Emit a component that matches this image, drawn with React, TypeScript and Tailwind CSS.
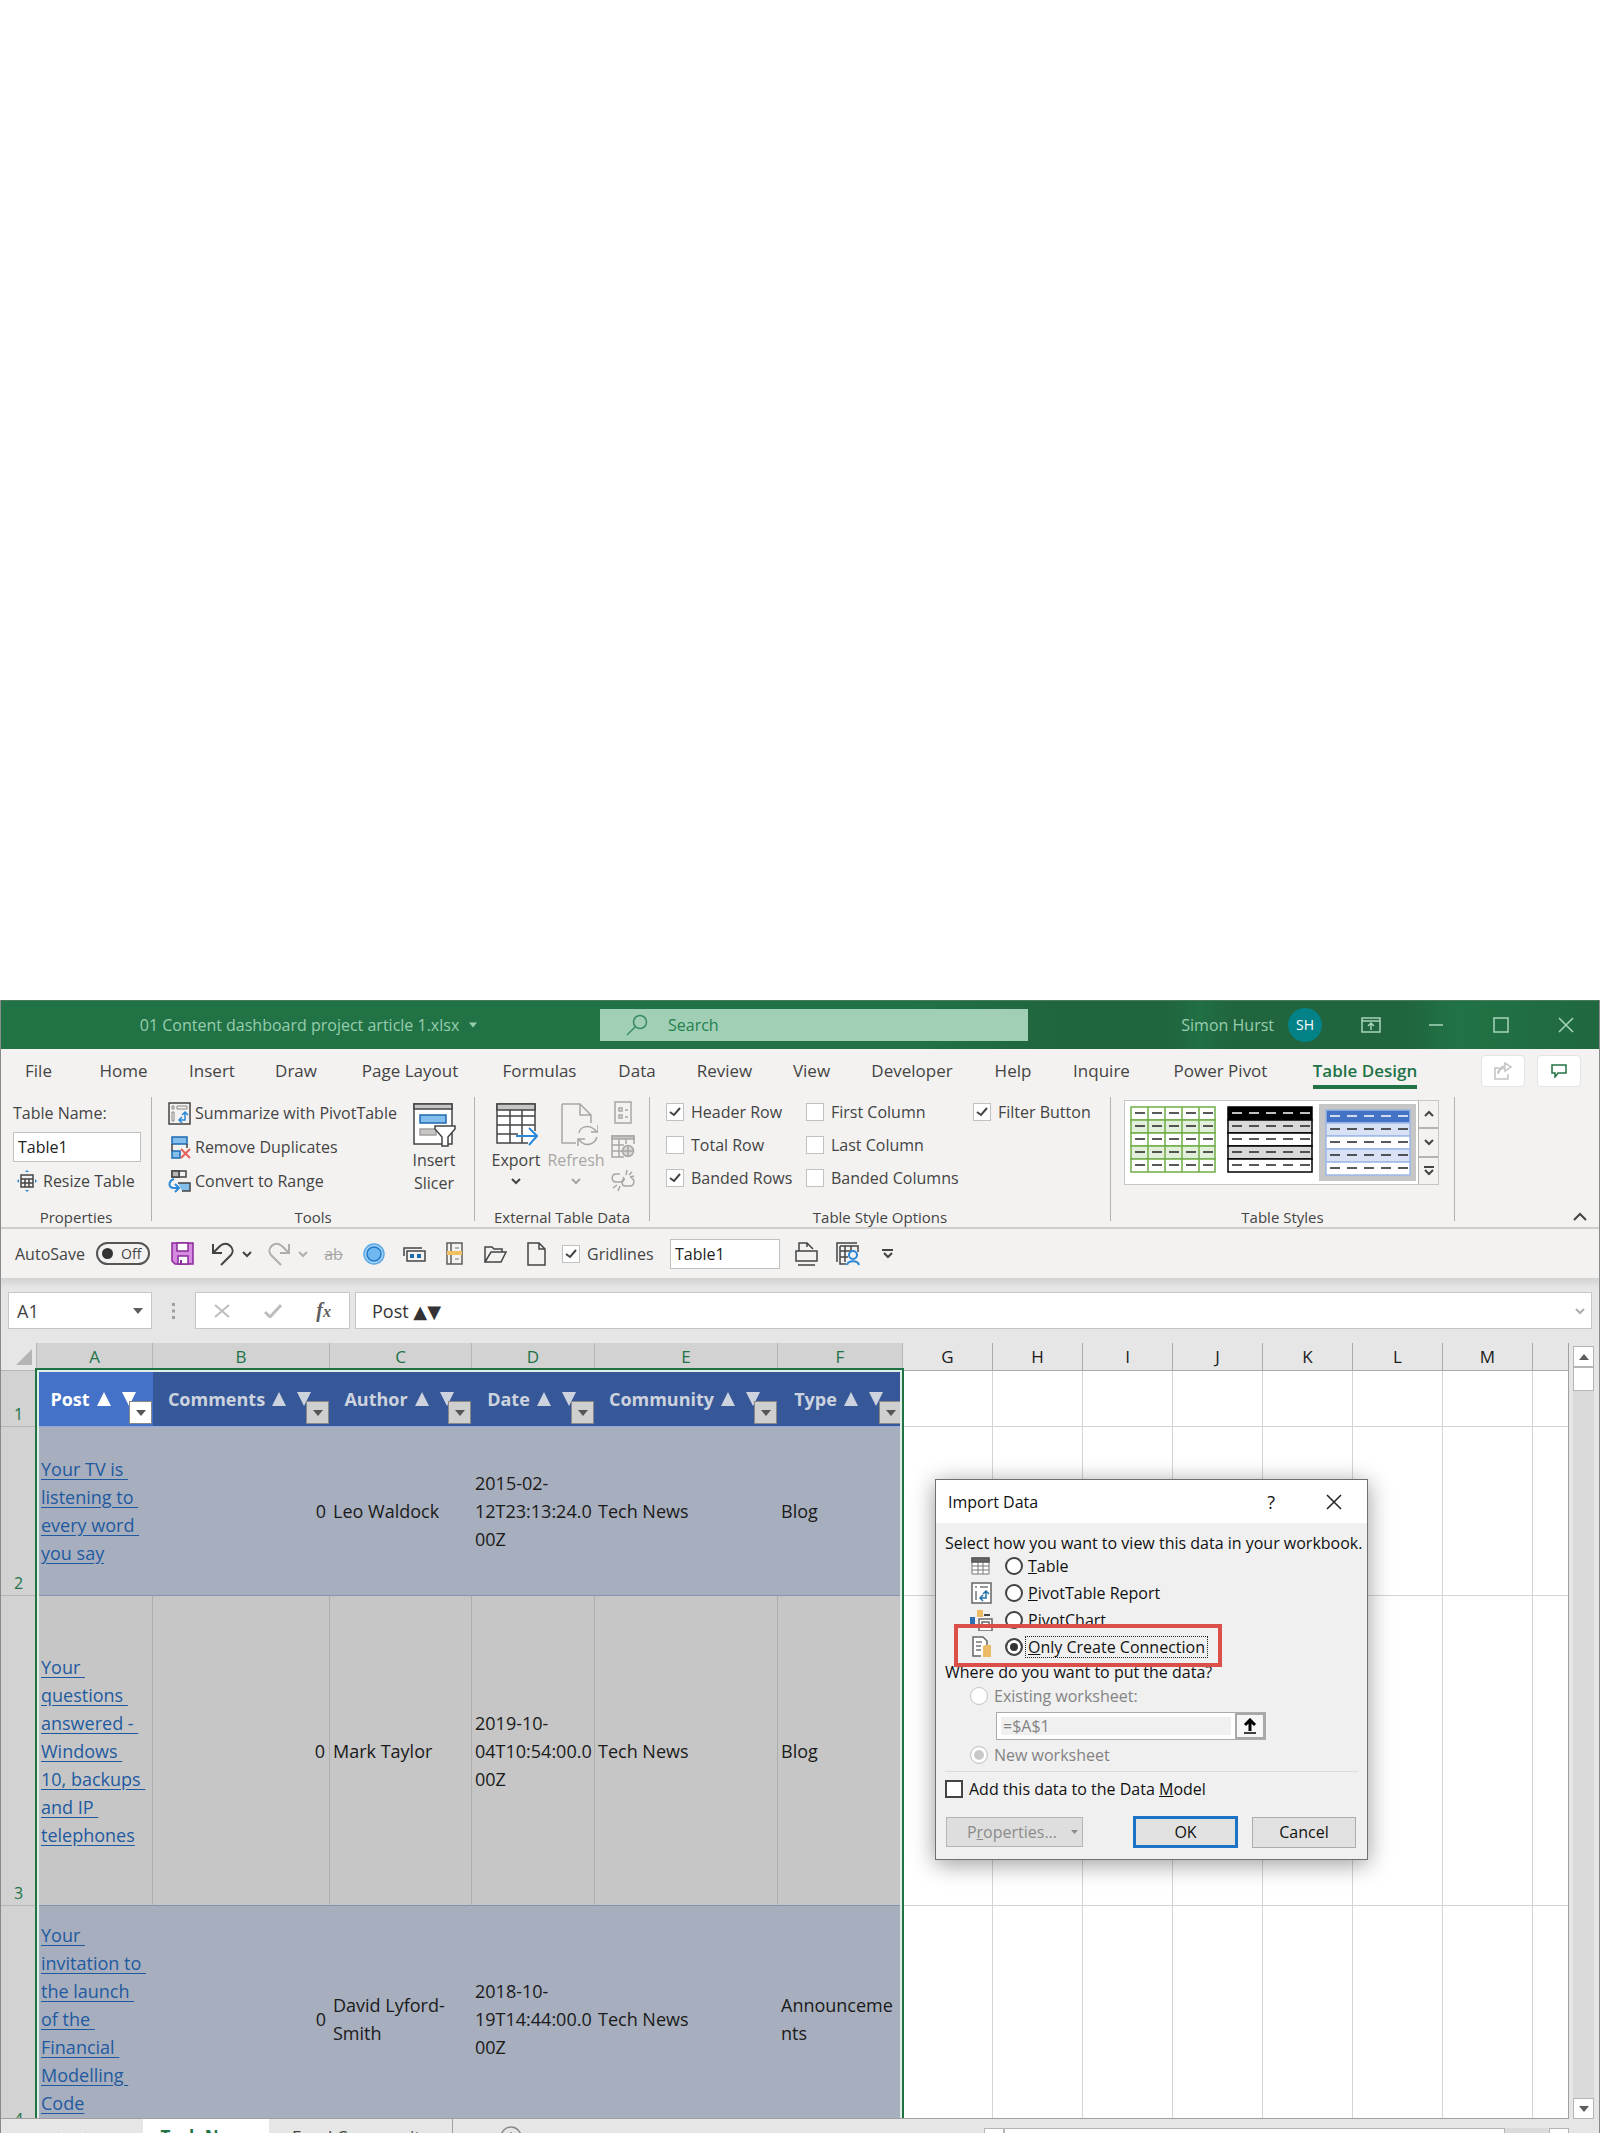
import type { ReactNode } from 'react';
import { clsx } from 'clsx';

const tabs = [
  { label: 'File', width: 'w-[75px]' },
  { label: 'Home', width: 'w-[95px]' },
  { label: 'Insert', width: 'w-[82px]' },
  { label: 'Draw', width: 'w-[86px]' },
  { label: 'Page Layout', width: 'w-[142px]' },
  { label: 'Formulas', width: 'w-[117px]' },
  { label: 'Data', width: 'w-[78px]' },
  { label: 'Review', width: 'w-[97px]' },
  { label: 'View', width: 'w-[77px]' },
  { label: 'Developer', width: 'w-[124px]' },
  { label: 'Help', width: 'w-[78px]' },
  { label: 'Inquire', width: 'w-[99px]' },
  { label: 'Power Pivot', width: 'w-[139px]' },
  { label: 'Table Design', width: 'w-[150px]', active: true },
];

const columns = [
  { letter: 'A', width: 'w-[116px]', title: 'Post' },
  { letter: 'B', width: 'w-[177px]', title: 'Comments' },
  { letter: 'C', width: 'w-[142px]', title: 'Author' },
  { letter: 'D', width: 'w-[123px]', title: 'Date' },
  { letter: 'E', width: 'w-[183px]', title: 'Community' },
  { letter: 'F', width: 'w-[125px]', title: 'Type' },
];

const emptyColumns = ['G', 'H', 'I', 'J', 'K', 'L', 'M'];

const rows = [
  {
    height: 'h-[169px]',
    post: 'Your TV is \nlistening to \nevery word \nyou say',
    comments: 0,
    author: 'Leo Waldock',
    date: '2015-02-\n12T23:13:24.0\n00Z',
    community: 'Tech News',
    type: 'Blog',
  },
  {
    height: 'h-[310px]',
    post: 'Your \nquestions \nanswered - \nWindows \n10, backups \nand IP \ntelephones',
    comments: 0,
    author: 'Mark Taylor',
    date: '2019-10-\n04T10:54:00.0\n00Z',
    community: 'Tech News',
    type: 'Blog',
  },
  {
    height: 'h-[226px]',
    post: 'Your \ninvitation to \nthe launch \nof the \nFinancial \nModelling \nCode',
    comments: 0,
    author: 'David Lyford-\nSmith',
    date: '2018-10-\n19T14:44:00.0\n00Z',
    community: 'Tech News',
    type: 'Announceme\nnts',
  },
];

/* ---------- small shared pieces ---------- */

interface IconProps {
  w: number;
  h: number;
  children: ReactNode;
  className?: string;
}

function Icon({ w, h, children, className }: IconProps) {
  return (
    <svg
      width={w}
      height={h}
      viewBox={`0 0 ${w} ${h}`}
      fill="none"
      stroke="#444"
      strokeWidth="1.5"
      className={clsx('shrink-0', className)}
      aria-hidden="true"
    >
      {children}
    </svg>
  );
}

function Chevron({ className, up = false }: { className?: string; up?: boolean }) {
  return (
    <Icon w={10} h={8} className={className}>
      <path d={up ? 'M1 6L5 2L9 6' : 'M1 2L5 6L9 2'} stroke="currentColor" strokeWidth="2" />
    </Icon>
  );
}

function Triangle({ className, up = false }: { className?: string; up?: boolean }) {
  return (
    <Icon w={10} h={6} className={className}>
      <path d={up ? 'M0 6H10L5 0Z' : 'M0 0H10L5 6Z'} fill="currentColor" stroke="none" />
    </Icon>
  );
}

function CheckOption({ label, checked = false }: { label: string; checked?: boolean }) {
  return (
    <label className="flex items-center gap-[7px]">
      <span className="relative flex">
        <input
          type="checkbox"
          defaultChecked={checked}
          className="peer h-[18px] w-[18px] appearance-none border border-[#c3c1bf] bg-white"
        />
        <Icon w={18} h={18} className="pointer-events-none absolute inset-0 hidden peer-checked:block">
          <path d="M4 9L8 12L14 5" strokeWidth="2" />
        </Icon>
      </span>
      {label}
    </label>
  );
}

function RibbonGroup({ label, className, children }: { label: string; className: string; children: ReactNode }) {
  return (
    <section className={clsx('flex shrink-0 flex-col border-r border-[#b5b3b1]', className)}>
      <div className="flex h-28 shrink-0 items-start">{children}</div>
      <h2 className="h-3 text-center text-[15px] leading-4 whitespace-nowrap">{label}</h2>
    </section>
  );
}

/* ---------- title bar ---------- */

function TitleBar() {
  return (
    <header className="flex h-[49px] shrink-0 items-center border-t border-[#4a7a5e] bg-[linear-gradient(90deg,#217346_57%,#20653e_66%,#20653e_73%,#216f44_75%,#20653e_77%,#20653e_88%,#217346_91%,#20683f_100%)] text-[#97cdae]">
      <div className="flex w-[599px] items-center justify-center gap-[10px] pl-4">
        <span>01 Content dashboard project article 1.xlsx</span>
        <Triangle className="w-2" />
      </div>
      <label className="flex h-8 w-[428px] items-center gap-5 bg-[#a0cfb5] pl-[26px] text-[#25804d]">
        <Icon w={22} h={22}>
          <circle cx="14" cy="8" r="6.5" stroke="#378c5d" />
          <path d="M9 13L1 21" stroke="#378c5d" />
        </Icon>
        <input
          type="text"
          aria-label="Search"
          placeholder="Search"
          className="w-full bg-transparent outline-none placeholder:text-[#25804d]"
        />
      </label>
      <div className="flex flex-1 items-center justify-end">
        <span>Simon Hurst</span>
        <span className="ml-[14px] flex h-[34px] w-[34px] items-center justify-center rounded-full bg-[#038387] text-sm text-white">
          SH
        </span>
        <button type="button" aria-label="Ribbon display options" className="ml-[39px]">
          <Icon w={20} h={16}>
            <path d="M1 1H19V15H1ZM1 4H19M10 13V6M7 9L10 6L13 9" stroke="#a8d5bb" />
          </Icon>
        </button>
        <button type="button" aria-label="Minimize" className="ml-[47px]">
          <Icon w={16} h={16}>
            <path d="M1 8H15" stroke="#a8d5bb" />
          </Icon>
        </button>
        <button type="button" aria-label="Maximize" className="ml-[49px]">
          <Icon w={16} h={16}>
            <path d="M1 1H15V15H1Z" stroke="#a8d5bb" />
          </Icon>
        </button>
        <button type="button" aria-label="Close" className="mr-[25px] ml-[49px]">
          <Icon w={16} h={16}>
            <path d="M1 1L15 15M15 1L1 15" stroke="#a8d5bb" />
          </Icon>
        </button>
      </div>
    </header>
  );
}

/* ---------- ribbon ---------- */

function RibbonTabs() {
  return (
    <nav className="flex h-12 shrink-0 items-start text-[17px]">
      {tabs.map((tab) => (
        <button key={tab.label} type="button" className={clsx('flex shrink-0 justify-center pt-2', tab.width)}>
          <span
            className={clsx(
              'h-8 border-b-4 leading-7 whitespace-nowrap',
              tab.active ? 'border-[#217346] font-semibold text-[#217346]' : 'border-transparent',
            )}
          >
            {tab.label}
          </span>
        </button>
      ))}
      <div className="ml-auto flex gap-3 pt-[6px] pr-[18px]">
        <button type="button" aria-label="Share" className="flex h-8 w-11 items-center justify-center rounded-sm border border-[#e6e4e2] bg-white">
          <Icon w={18} h={18}>
            <path d="M5 6H1V17H14V12M4 12C5 8 8 6 11 6V9L17 5L11 1V4C7 4 4 8 4 12Z" stroke="#c4c2c0" />
          </Icon>
        </button>
        <button type="button" aria-label="Comments" className="flex h-8 w-11 items-center justify-center rounded-sm border border-[#e6e4e2] bg-white">
          <Icon w={16} h={14}>
            <path d="M1 1H15V9H7L4 13V9H1Z" stroke="#217346" />
          </Icon>
        </button>
      </div>
    </nav>
  );
}

function PropertiesGroup() {
  return (
    <RibbonGroup label="Properties" className="w-[151px]">
      <div className="flex flex-col pl-3">
        <label htmlFor="table-name" className="mt-1 leading-6">
          Table Name:
        </label>
        <input
          id="table-name"
          type="text"
          defaultValue="Table1"
          className="mt-[7px] h-[30px] w-32 border border-[#c3c1bf] bg-white px-1 text-[#222]"
        />
        <button type="button" className="mt-[7px] flex items-center gap-[6px] pl-1 leading-6 whitespace-nowrap">
          <Icon w={20} h={22}>
            <path d="M4 5H16V17H4ZM4 9H16M4 13H16M8 9V17M12 9V17" />
            <path d="M8 2L10 0L12 2ZM8 20L10 22L12 20ZM2 9L0 11L2 13ZM18 9L20 11L18 13Z" fill="#2b88d8" stroke="none" />
          </Icon>
          Resize Table
        </button>
      </div>
    </RibbonGroup>
  );
}

function ToolsGroup() {
  return (
    <RibbonGroup label="Tools" className="w-[323px]">
      <div className="flex w-[242px] flex-col gap-[10px] pt-1 pl-4 leading-6">
        <button type="button" className="flex items-center gap-1 whitespace-nowrap">
          <Icon w={23} h={23}>
            <path d="M1 1H22V22H1Z" />
            <path d="M4 4H6V7H4ZM9 4H19V7H9ZM4 10H6V19H4Z" stroke="#8a8886" strokeWidth="1" />
            <path d="M11 18H17V10M14 13L17 10L20 13M14 15L11 18L14 21" stroke="#2b88d8" />
          </Icon>
          Summarize with PivotTable
        </button>
        <button type="button" className="flex items-center gap-1 whitespace-nowrap">
          <Icon w={23} h={23}>
            <path d="M4 1H19V8H4ZM4 15H12V22H4Z" fill="#83beec" stroke="#1e6ab0" />
            <path d="M4 8V15M19 8V12" />
            <path d="M13 13L22 22M22 13L13 22" stroke="#e8605c" strokeWidth="2" />
          </Icon>
          Remove Duplicates
        </button>
        <button type="button" className="flex items-center gap-1 whitespace-nowrap">
          <Icon w={23} h={23}>
            <path d="M4 1H18V7H4ZM11 1V7" />
            <path d="M11 1H4V7H11Z" fill="#b8b6b4" />
            <path d="M10 13H22V21H14" fill="#83beec" />
            <path d="M6 9C0 11 0 18 6 18H11M7 14L11 18L7 22" stroke="#2b88d8" strokeWidth="2" />
          </Icon>
          Convert to Range
        </button>
      </div>
      <button type="button" className="flex w-[80px] flex-col items-center pt-[6px]">
        <Icon w={44} h={44}>
          <path d="M2 1H40V41H2Z" fill="#fff" />
          <path d="M2 1H40V6H2Z" fill="#c8c6c4" />
          <path d="M8 12H34V20H8Z" fill="#83beec" stroke="#1e6ab0" />
          <path d="M8 26H24V32H8Z" fill="#c8c6c4" stroke="#a19f9d" />
          <path d="M23 23H43V26L36 34V43H30V34L23 26Z" fill="#fff" />
        </Icon>
        <span className="pt-[2px] leading-[23px]">
          Insert
          <br />
          Slicer
        </span>
      </button>
    </RibbonGroup>
  );
}

function ExternalDataGroup() {
  return (
    <RibbonGroup label="External Table Data" className="w-[175px]">
      <button type="button" className="ml-3 flex w-[58px] flex-col items-center pt-[6px]">
        <Icon w={44} h={44}>
          <path d="M3 1H41V40H3Z" fill="#fff" stroke="none" />
          <path d="M41 28V1H3V40H34M3 13H41M3 22H41M3 31H24M16 7V40M28 7V40" />
          <path d="M3 1H41V7H3Z" fill="#c8c6c4" />
          <path d="M22 33H43M35 25L43 33L35 42" stroke="#2b88d8" strokeWidth="2" />
        </Icon>
        <span className="leading-[26px]">Export</span>
        <Chevron className="mt-1" />
      </button>
      <button type="button" disabled className="ml-px flex w-[60px] flex-col items-center pt-[6px] text-[#a8a6a4]">
        <Icon w={44} h={44}>
          <path d="M8 1H26L37 12V20M26 1V12H37M22 40H8V1" stroke="#a8a6a4" />
          <path d="M25 30C26 24 34 21 40 26L43 29M44 22V29H37M43 34C41 41 33 44 27 39L25 36M24 43V36H31" stroke="#a8a6a4" />
        </Icon>
        <span className="leading-[26px]">Refresh</span>
        <Chevron className="mt-1" />
      </button>
      <div className="flex flex-col gap-[11px] pt-[4px] pl-[5px]">
        <button type="button" disabled aria-label="Properties">
          <Icon w={24} h={23}>
            <path d="M4 1H20V22H4Z" stroke="#a8a6a4" />
            <path d="M8 7H11V10H8ZM14 9H17M8 14H11V17H8ZM14 16H17" stroke="#a8a6a4" />
          </Icon>
        </button>
        <button type="button" disabled aria-label="Open in browser">
          <Icon w={24} h={23}>
            <path d="M13 22H1V1H23V9M1 10H13M1 16H12M8 4V22M15 4V9" stroke="#a8a6a4" />
            <path d="M1 1H23V4H1Z" fill="#c8c6c4" stroke="#a8a6a4" />
            <circle cx="17" cy="16" r="5.5" fill="#dad8d6" stroke="#a8a6a4" />
            <path d="M12 16H22M17 11V21" stroke="#a8a6a4" />
          </Icon>
        </button>
        <button type="button" disabled aria-label="Unlink">
          <Icon w={24} h={23}>
            <path d="M9 5H5C0 5 0 13 5 13H10C13 13 14 10 12 8M14 10C10 10 10 17 14 17H19C24 17 24 9 20 9M16 1L15 6M21 3L18 6M23 7L19 8M6 16L2 19M9 17L7 22" stroke="#a8a6a4" />
          </Icon>
        </button>
      </div>
    </RibbonGroup>
  );
}

function StyleOptionsGroup() {
  return (
    <RibbonGroup label="Table Style Options" className="w-[461px]">
      <div className="flex w-[140px] flex-col gap-[9px] pt-[3px] pl-4 leading-6 whitespace-nowrap">
        <CheckOption label="Header Row" checked />
        <CheckOption label="Total Row" />
        <CheckOption label="Banded Rows" checked />
      </div>
      <div className="flex w-[167px] flex-col gap-[9px] pt-[3px] pl-4 leading-6 whitespace-nowrap">
        <CheckOption label="First Column" />
        <CheckOption label="Last Column" />
        <CheckOption label="Banded Columns" />
      </div>
      <div className="pt-[3px] pl-4 leading-6 whitespace-nowrap">
        <CheckOption label="Filter Button" checked />
      </div>
    </RibbonGroup>
  );
}

interface SwatchProps {
  label: string;
  line: string;
  head: string;
  band: string;
  headDash?: string;
  grid?: boolean;
}

function StyleSwatch({ label, line, head, band, headDash = '#222', grid = false }: SwatchProps) {
  return (
    <button type="button" aria-label={label}>
      <Icon w={86} h={67}>
        {[0, 1, 2, 3, 4].map((r) => (
          <g key={r}>
            <rect x="1" y={1 + r * 13} width="84" height="13" fill={r === 0 ? head : r % 2 ? band : '#fff'} stroke={line} />
            {[0, 1, 2, 3, 4].map((c) => (
              <path key={c} d={`M${5 + c * 17} ${7 + r * 13}h10`} stroke={r === 0 ? headDash : '#222'} />
            ))}
          </g>
        ))}
        {grid && <path d="M18 1V66M35 1V66M52 1V66M69 1V66" stroke={line} />}
      </Icon>
    </button>
  );
}

function TableStylesGroup() {
  return (
    <RibbonGroup label="Table Styles" className="w-[344px]">
      <div className="mt-[3px] ml-[13px] flex h-[85px] border border-[#c8c6c4] bg-white">
        <div className="flex items-center">
          <div className="px-[5px]">
            <StyleSwatch label="Light green style" line="#70ad47" head="#fff" band="#e2efda" grid />
          </div>
          <div className="px-[6px]">
            <StyleSwatch label="Black style" line="#000" head="#000" band="#d9d9d9" headDash="#fff" />
          </div>
          <div className="flex h-[77px] w-[97px] items-center justify-center bg-[#c6c6c6]">
            <StyleSwatch label="Blue style" line="#9db8e6" head="#4472c4" band="#d9e2f5" headDash="#fff" />
          </div>
        </div>
        <div className="ml-[2px] flex w-5 flex-col divide-y-2 divide-[#b5b3b1] border-l border-[#b5b3b1] bg-[#f3f2f1]">
          <button type="button" aria-label="Previous styles" className="flex flex-1 items-center justify-center">
            <Chevron up />
          </button>
          <button type="button" aria-label="Next styles" className="flex flex-1 items-center justify-center">
            <Chevron />
          </button>
          <button type="button" aria-label="More styles" className="flex flex-1 items-center justify-center">
            <Icon w={10} h={10}>
              <path d="M0 1H10M1 4L5 8L9 4" strokeWidth="2" />
            </Icon>
          </button>
        </div>
      </div>
    </RibbonGroup>
  );
}

function Ribbon() {
  return (
    <div className="flex h-[132px] shrink-0 border-b-2 border-[#cfcdcb] pb-[6px]">
      <PropertiesGroup />
      <ToolsGroup />
      <ExternalDataGroup />
      <StyleOptionsGroup />
      <TableStylesGroup />
      <button type="button" aria-label="Collapse ribbon" className="mr-3 ml-auto self-end">
        <Icon w={14} h={9}>
          <path d="M1 8L7 2L13 8" strokeWidth="2" />
        </Icon>
      </button>
    </div>
  );
}

function QuickAccess() {
  return (
    <div className="flex h-[49px] shrink-0 items-center pl-[14px]">
      <span className="w-[81px]">AutoSave</span>
      <button
        type="button"
        role="switch"
        aria-checked="false"
        aria-label="AutoSave"
        className="flex h-[23px] w-[54px] items-center gap-2 rounded-full border-2 border-[#555] pl-1 text-sm"
      >
        <span className="h-[11px] w-[11px] rounded-full bg-[#333]" />
        Off
      </button>
      <button type="button" aria-label="Save" className="ml-[21px]">
        <Icon w={23} h={23}>
          <path d="M1 1H22V22H4L1 19Z" fill="#d58be0" stroke="#8a2a9a" />
          <path d="M6 1H17V9H6ZM7 14H17V22H7Z" fill="#fff" stroke="#8a2a9a" />
          <path d="M10 18V22" stroke="#8a2a9a" strokeWidth="2" />
        </Icon>
      </button>
      <button type="button" aria-label="Undo" className="ml-[18px] flex items-center gap-[8px]">
        <Icon w={22} h={24}>
          <path d="M1 2V11H10M2 10L8 4C16 -2 24 7 19 13L9 23" strokeWidth="2" />
        </Icon>
        <Chevron />
      </button>
      <button type="button" disabled aria-label="Redo" className="ml-[16px] flex items-center gap-[8px] text-[#b0aeac]">
        <Icon w={22} h={24}>
          <path d="M21 2V11H12M20 10L14 4C6 -2 -2 7 3 13L13 23" stroke="#b0aeac" strokeWidth="2" />
        </Icon>
        <Chevron />
      </button>
      <button type="button" disabled className="ml-[14px] w-[23px] text-center text-[#a8a6a4] line-through">
        ab
      </button>
      <button type="button" aria-label="Shape" className="ml-[18px]">
        <Icon w={22} h={22}>
          <circle cx="11" cy="11" r="10" fill="#a9d3f5" stroke="#5aa9e6" />
          <circle cx="11" cy="11" r="7" fill="#71b7f0" stroke="#1e7ac8" />
        </Icon>
      </button>
      <button type="button" aria-label="Form controls" className="ml-[18px]">
        <Icon w={23} h={16}>
          <path d="M1 10V2H19M4 5H22V15H4Z" />
          <path d="M7 8H11V12H7ZM14 8H18V12H14Z" fill="#1e6ab0" stroke="none" />
        </Icon>
      </button>
      <button type="button" aria-label="Page break" className="ml-[20px]">
        <Icon w={18} h={23}>
          <path d="M1 1H16V22H1ZM5 1V22" stroke="#605e5c" />
          <path d="M1 9H16V13H1Z" fill="#f3c05f" stroke="none" />
          <path d="M9 6H13M9 17H13" stroke="#a19f9d" />
        </Icon>
      </button>
      <button type="button" aria-label="Open" className="ml-[20px]">
        <Icon w={24} h={18}>
          <path d="M1 17V2H8L10 4H18V7M1 17L7 7H22L17 17Z" />
        </Icon>
      </button>
      <button type="button" aria-label="New" className="ml-[19px]">
        <Icon w={20} h={24}>
          <path d="M1 1H12L18 7V23H1ZM12 1V7H18" />
        </Icon>
      </button>
      <div className="ml-[15px] w-[108px]">
        <CheckOption label="Gridlines" checked />
      </div>
      <input
        type="text"
        aria-label="Table name"
        defaultValue="Table1"
        className="h-[30px] w-[110px] border border-[#c3c1bf] bg-white px-1 text-[#222]"
      />
      <button type="button" aria-label="Print" className="ml-[15px]">
        <Icon w={23} h={24}>
          <path d="M4 9V1H12L18 7M12 1V5M1 9H22V19H1ZM3 23H20" />
        </Icon>
      </button>
      <button type="button" aria-label="Table people" className="ml-[18px]">
        <Icon w={24} h={24}>
          <path d="M1 20V1H21M4 4H22V10M4 4V22H10M4 9H14M4 15H12M9 4V20M15 4V9" />
          <circle cx="17" cy="13" r="4" stroke="#2b88d8" fill="#f3f2f1" strokeWidth="2" />
          <path d="M11 23C12 18 22 18 23 23" stroke="#2b88d8" strokeWidth="2" />
        </Icon>
      </button>
      <button type="button" aria-label="Customize toolbar" className="ml-[22px]">
        <Icon w={11} h={10}>
          <path d="M0 1H11M2 4L6 8L10 4" strokeWidth="2" />
        </Icon>
      </button>
    </div>
  );
}

/* ---------- formula bar ---------- */

function FormulaBar() {
  return (
    <div className="flex h-[65px] shrink-0 items-start bg-linear-to-b from-[#d2d2d2] to-[#e6e6e6] to-15% px-[7px] pt-[14px] text-lg">
      <label className="flex h-[37px] w-[144px] items-center border border-[#c8c6c4] bg-white px-2">
        <input type="text" aria-label="Name box" defaultValue="A1" className="w-full min-w-0 bg-transparent" />
        <Triangle className="text-[#605e5c]" />
      </label>
      <Icon w={3} h={16} className="mt-[11px] ml-5">
        <path d="M0 1.5h3M0 8h3M0 14.5h3" stroke="#a19f9d" strokeWidth="3" />
      </Icon>
      <div className="ml-5 flex h-[37px] w-[155px] items-center justify-between border border-[#c8c6c4] bg-white px-[18px]">
        <button type="button" disabled aria-label="Cancel entry">
          <Icon w={16} h={14}>
            <path d="M1 1L15 13M15 1L1 13" stroke="#c0bebc" strokeWidth="2" />
          </Icon>
        </button>
        <button type="button" disabled aria-label="Accept entry">
          <Icon w={18} h={14}>
            <path d="M1 8L6 13L17 1" stroke="#c0bebc" strokeWidth="3" />
          </Icon>
        </button>
        <button type="button" className="font-['Liberation_Serif',serif] text-xl leading-6 font-bold text-[#605e5c] italic">
          f<span className="text-base">x</span>
        </button>
      </div>
      <label className="ml-[5px] flex h-[37px] flex-1 items-center border border-[#c8c6c4] bg-white pr-[6px] pl-4">
        <input
          type="text"
          aria-label="Formula bar"
          defaultValue="Post ▲▼"
          className="w-full bg-transparent font-['Open_Sans','DejaVu_Sans',sans-serif] text-[#333]"
        />
        <Chevron className="text-[#b0aeac]" />
      </label>
    </div>
  );
}

/* ---------- sheet ---------- */

function HeaderCell({ title, first }: { title: string; first: boolean }) {
  return (
    <th
      scope="col"
      className={clsx(
        'relative border-b border-[#8ea9db] p-0 text-center text-lg leading-6 font-bold whitespace-nowrap',
        first ? 'bg-[#4472c8] text-white' : 'bg-[#365899] text-[#cdd3de]',
      )}
    >
      <span className="flex items-center justify-center gap-[7px] pr-1">
        {title}
        <Icon w={39} h={14}>
          <path d="M0 14H14L7 0ZM25 0H39L32 14Z" fill="currentColor" stroke="none" />
        </Icon>
      </span>
      <button
        type="button"
        aria-label={`Filter ${title}`}
        className={clsx(
          'absolute right-px bottom-[2px] flex h-[23px] w-[23px] items-center justify-center border border-[#8a8886]',
          first ? 'bg-white' : 'bg-[#cfcfcf]',
        )}
      >
        <Triangle className="text-[#555]" />
      </button>
    </th>
  );
}

function RowNumber({ value }: { value: number }) {
  return (
    <th
      scope="row"
      className="border-r border-b border-[#b5b5b5] bg-[#d2d2d2] p-0 text-center align-bottom text-base leading-6 font-normal text-[#217346]"
    >
      {value}
    </th>
  );
}

function EmptyCells() {
  return (
    <>
      {emptyColumns.map((letter) => (
        <td key={letter} className="border-r border-b border-[#d4d4d4]" />
      ))}
      <td className="border-b border-[#d4d4d4]" />
    </>
  );
}

function Sheet() {
  return (
    <div className="relative min-w-0 flex-1 overflow-hidden border-r border-b border-[#a0a0a0] bg-white">
      <table className="w-full table-fixed border-separate border-spacing-0 text-lg leading-7 text-[#1a1a1a]">
        <colgroup>
          <col className="w-[36px]" />
          {columns.map((col) => (
            <col key={col.letter} className={col.width} />
          ))}
          {emptyColumns.map((letter) => (
            <col key={letter} className="w-[90px]" />
          ))}
          <col />
        </colgroup>
        <thead className="text-[17px] leading-6">
          <tr className="h-[28px]">
            <th className="border-r border-b border-[#b5b5b5] bg-[#e6e6e6] p-0" aria-label="Select all">
              <Icon w={16} h={16} className="mr-[4px] ml-auto">
                <path d="M16 0V16H0Z" fill="#b5b5b5" stroke="none" />
              </Icon>
            </th>
            {columns.map((col) => (
              <th key={col.letter} className="border-r border-b border-[#b5b5b5] bg-[#d2d2d2] p-0 font-normal text-[#217346]">
                {col.letter}
              </th>
            ))}
            {emptyColumns.map((letter) => (
              <th key={letter} className="border-r border-b border-[#ababab] bg-[#e6e6e6] p-0 font-normal">
                {letter}
              </th>
            ))}
            <th className="border-b border-[#ababab] bg-[#e6e6e6] p-0" />
          </tr>
        </thead>
        <tbody>
          <tr className="h-[56px]">
            <RowNumber value={1} />
            {columns.map((col, i) => (
              <HeaderCell key={col.letter} title={col.title} first={i === 0} />
            ))}
            <EmptyCells />
          </tr>
          {rows.map((row, i) => {
            const cell = clsx(
              'border-b border-b-[#8393b0] py-0 pr-1 whitespace-pre',
              i % 2 ? 'border-r border-r-[#adadad] bg-[#c6c6c6]' : 'bg-[#a7aebd]',
            );
            return (
              <tr key={row.post} className={row.height}>
                <RowNumber value={i + 2} />
                <td className={clsx(cell, 'pl-1')}>
                  <a href="#post" className="text-[#1f5aa0] underline underline-offset-3">
                    {row.post}
                  </a>
                </td>
                <td className={clsx(cell, 'text-right')}>{row.comments}</td>
                <td className={clsx(cell, 'pl-[3px]')}>{row.author}</td>
                <td className={clsx(cell, 'pl-[3px]')}>{row.date}</td>
                <td className={clsx(cell, 'pl-[3px]')}>{row.community}</td>
                <td className={clsx(cell, 'pl-[3px]')}>{row.type}</td>
                <EmptyCells />
              </tr>
            );
          })}
        </tbody>
      </table>
      {/* selection frame */}
      <div className="pointer-events-none absolute top-[25px] -bottom-3 left-[34px] w-[869px] border-2 border-[#217346]">
        <div className="h-full border-2 border-[#dff0e6]" />
      </div>
    </div>
  );
}

function VerticalScroll() {
  return (
    <div className="flex w-[30px] shrink-0 flex-col bg-[#e6e6e6] pt-[3px] pl-1">
      <button type="button" aria-label="Scroll up" className="flex h-[21px] w-[21px] items-center justify-center border border-[#b5b5b5] bg-white">
        <Triangle up className="text-[#605e5c]" />
      </button>
      <div className="w-[21px] flex-1 bg-[#dadada]">
        <div className="h-6 border border-[#b5b5b5] bg-white" />
      </div>
      <button type="button" aria-label="Scroll down" className="flex h-[21px] w-[21px] items-center justify-center border border-[#b5b5b5] bg-white">
        <Triangle className="text-[#605e5c]" />
      </button>
    </div>
  );
}

function SheetTabs() {
  return (
    <div className="-mb-[22px] flex h-9 shrink-0 bg-[#e6e6e6] text-[17px] leading-9">
      <div className="flex w-[142px] items-center justify-center gap-6">
        <button type="button" aria-label="Previous sheet">
          <Icon w={8} h={10}>
            <path d="M7 0V10L1 5Z" fill="#b0b0b0" stroke="none" />
          </Icon>
        </button>
        <button type="button" aria-label="Next sheet">
          <Icon w={8} h={10}>
            <path d="M1 0V10L7 5Z" fill="#b0b0b0" stroke="none" />
          </Icon>
        </button>
      </div>
      <button type="button" className="w-[126px] bg-white font-bold text-[#217346]">
        Tech News
      </button>
      <button type="button" className="w-[184px] border-r border-[#a0a0a0] text-[#444]">
        Excel Community
      </button>
      <button type="button" aria-label="New sheet" className="ml-[47px]">
        <Icon w={22} h={22}>
          <circle cx="11" cy="11" r="10" stroke="#8a8886" />
          <path d="M11 6V16M6 11H16" stroke="#8a8886" />
        </Icon>
      </button>
      <div className="mt-[9px] mr-[30px] ml-auto flex h-5 w-[585px] bg-[#dadada]">
        <button type="button" aria-label="Scroll left" className="w-5 border border-[#b5b5b5] bg-white" />
        <div className="w-[501px] border border-[#b5b5b5] bg-white" />
        <button type="button" aria-label="Scroll right" className="ml-auto w-5 border border-[#b5b5b5] bg-white" />
      </div>
    </div>
  );
}

/* ---------- import dialog ---------- */

const radioClass =
  'h-[18px] w-[18px] appearance-none rounded-full border-2 border-[#444] bg-white checked:bg-[#333] checked:shadow-[inset_0_0_0_3px_#fff] disabled:border disabled:border-[#c4c4c4] disabled:checked:bg-[#c8c8c8]';

function ViewOption({ icon, checked, children }: { icon: ReactNode; checked?: boolean; children: ReactNode }) {
  return (
    <label className="flex h-[27px] items-center pl-[26px]">
      <span className="w-[34px]">{icon}</span>
      <input type="radio" name="view" defaultChecked={checked} className={radioClass} />
      <span className={clsx('ml-[3px] px-[2px] leading-5', checked && 'outline-1 outline-[#222] outline-dotted')}>{children}</span>
    </label>
  );
}

function ImportDialog() {
  return (
    <div
      role="dialog"
      aria-label="Import Data"
      className="absolute top-[479px] left-[934px] w-[433px] border border-[#707070] bg-[#f0f0f0] text-[#111] shadow-[0_4px_22px_rgba(0,0,0,0.4)]"
    >
      <div className="flex h-[43px] items-center bg-white pr-[25px] pl-3">
        <h1 className="flex-1">Import Data</h1>
        <button type="button" aria-label="Help" className="mr-[51px] text-lg">
          ?
        </button>
        <button type="button" aria-label="Close dialog">
          <Icon w={16} h={16}>
            <path d="M1 1L15 15M15 1L1 15" stroke="#222" />
          </Icon>
        </button>
      </div>
      <div className="relative px-[9px] pt-2 pb-[11px]">
        <p className="leading-6 whitespace-nowrap">Select how you want to view this data in your workbook.</p>
        <fieldset className="-mt-[3px]">
          <ViewOption
            icon={
              <Icon w={20} h={18}>
                <path d="M1 1H18V17H1ZM1 9H18M1 13H18M7 5V17M12 5V17" fill="#fff" stroke="#777" strokeWidth="1" />
                <path d="M1 1H18V5H1Z" fill="#666" stroke="#555" />
              </Icon>
            }
          >
            <u>T</u>able
          </ViewOption>
          <ViewOption
            icon={
              <Icon w={22} h={22}>
                <path d="M1 1H20V21H1Z" fill="#fff" stroke="#666" />
                <path d="M4 4H6V6H4ZM9 4H17V6H9ZM4 9H6V18H4Z" fill="#999" stroke="none" />
                <path d="M9 16H15V9M12 12L15 9L18 12M12 13L9 16L12 19" stroke="#2471a8" />
              </Icon>
            }
          >
            <u>P</u>ivotTable Report
          </ViewOption>
          <ViewOption
            icon={
              <Icon w={24} h={22} className="-ml-[2px]">
                <path d="M1 8H6V18H1Z" fill="#2f6fb4" stroke="none" />
                <path d="M8 1H14V8H8Z" fill="#ecbb66" stroke="none" />
                <path d="M15 6H21" strokeWidth="2" />
                <path d="M10 10H23V22H10ZM13 13H20V18H13Z" fill="#fff" stroke="#666" />
              </Icon>
            }
          >
            Pivot<u>C</u>hart
          </ViewOption>
          <ViewOption
            checked
            icon={
              <Icon w={22} h={22}>
                <path d="M10 20H2V1H12L16 5V9" fill="#fff" stroke="#666" />
                <path d="M5 6H11M5 10H10M5 14H10" stroke="#777" />
                <path d="M12 10L14 9H20V21H12Z" fill="#ecbb66" stroke="none" />
              </Icon>
            }
          >
            <u>O</u>nly Create Connection
          </ViewOption>
        </fieldset>
        {/* highlight around the chosen option */}
        <div className="absolute top-[101px] left-[18px] h-[43px] w-[268px] border-4 border-[#dc4f49]" />
        <p className="leading-6">Where do you want to put the data?</p>
        <fieldset disabled className="text-[#838383]">
          <label className="flex h-6 items-center gap-[6px] pl-[25px]">
            <input type="radio" name="target" className={radioClass} />
            Existing worksheet:
          </label>
          <div className="mt-1 ml-[51px] flex h-7 w-[270px] border border-[#ababab]">
            <input
              type="text"
              aria-label="Target cell"
              defaultValue="=$A$1"
              className="min-w-0 flex-1 border-4 border-white bg-[#f0f0f0] px-[2px] leading-5"
            />
            <button type="button" aria-label="Pick range" className="flex w-[30px] items-center justify-center border-2 border-[#a8a8a8] bg-[#f6f6f6]">
              <Icon w={14} h={16}>
                <path d="M7 13V2M2 7L7 2L12 7" stroke="#000" strokeWidth="3" />
                <path d="M1 15H13" stroke="#000" />
              </Icon>
            </button>
          </div>
          <label className="mt-[3px] flex h-6 items-center gap-[6px] pl-[25px]">
            <input type="radio" name="target" defaultChecked className={radioClass} />
            New worksheet
          </label>
        </fieldset>
        <label className="mt-1 flex items-center gap-[6px] border-t border-[#dcdcdc] pt-[5px] leading-6">
          <input type="checkbox" className="h-[18px] w-[18px] appearance-none border-2 border-[#444] bg-white" />
          <span>
            Add this data to the Data <u>M</u>odel
          </span>
        </label>
        <div className="mt-[15px] flex items-center pl-px">
          <button
            type="button"
            disabled
            className="flex h-[30px] w-[137px] items-center justify-end gap-[14px] border border-[#b5b5b5] bg-[#dedede] pr-1 text-[#8c8c8c]"
          >
            <span>
              P<u>r</u>operties...
            </span>
            <Triangle className="w-[7px]" />
          </button>
          <button type="button" className="ml-[50px] h-8 w-[105px] border-3 border-[#1a73c4] bg-[#e1e1e1]">
            OK
          </button>
          <button type="button" className="ml-[14px] h-[31px] w-[104px] border border-[#adadad] bg-[#e1e1e1]">
            Cancel
          </button>
        </div>
      </div>
    </div>
  );
}

export default function App() {
  return (
    <div className="flex h-screen flex-col overflow-hidden bg-white pt-[1000px]">
      <main className="relative flex min-h-0 flex-1 flex-col border-x border-x-[#8a8a8a] bg-[#f3f2f1] font-['Open_Sans',sans-serif] text-base text-[#444]">
        <TitleBar />
        <RibbonTabs />
        <Ribbon />
        <QuickAccess />
        <FormulaBar />
        <div className="flex min-h-0 flex-1">
          <Sheet />
          <VerticalScroll />
        </div>
        <SheetTabs />
        <ImportDialog />
      </main>
    </div>
  );
}
